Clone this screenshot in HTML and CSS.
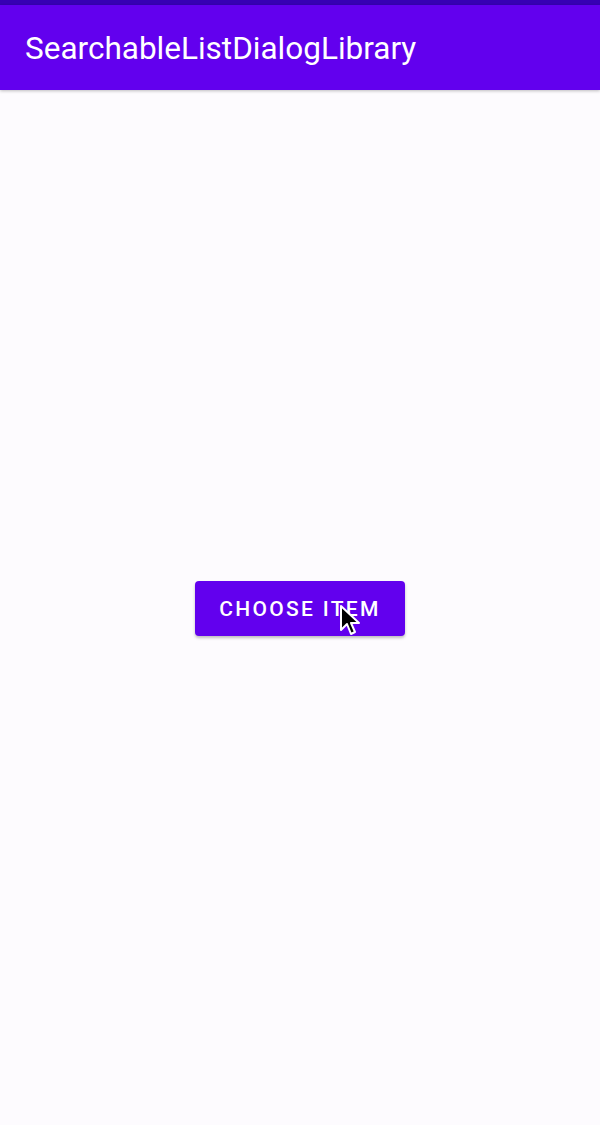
FILE: index.html
```html
<!DOCTYPE html>
<html>
<head>
<meta charset="utf-8">
<link rel="stylesheet" href="styles.css">
</head>
<body>
<div class="status"></div>
<header class="appbar"><h1 class="title">SearchableListDialogLibrary</h1></header>
<main class="content">
  <div class="btn-wrap">
    <button class="btn">CHOOSE ITEM</button>
    <svg class="cursor" width="24" height="34" viewBox="0 0 24 34"><path d="M2 2 L2 26 L8 20 L12 30 L16 28 L12 19 L20 19 Z" fill="#000" stroke="#fff" stroke-width="2" stroke-linejoin="round"/></svg>
  </div>
</main>
</body>
</html>
```
FILE: styles.css
```css
html, body { margin: 0; padding: 0; }
body {
  width: 600px; height: 1125px;
  background: #fdfbfe;
  font-family: Roboto, "Noto Sans", sans-serif;
  display: flex; flex-direction: column;
  overflow: hidden;
}
.status { height: 5px; background: #3700b3; }
.appbar {
  height: 85px; background: #6200ee;
  display: flex; align-items: center;
  padding-left: 25px;
  box-shadow: 0 1px 3px rgba(0,0,0,0.25);
}
.title {
  margin: 0; color: #fff; font-weight: 400; font-size: 31.5px;
  letter-spacing: 0;
  padding-top: 2px;
}
.content {
  flex: 1; display: flex; align-items: center; justify-content: center;
  padding-top: 2px;
}
.btn-wrap { position: relative; }
.btn {
  width: 210px; height: 55px;
  background: #6200ee; color: #fff;
  border: none; border-radius: 4px;
  font-family: Roboto, sans-serif; font-weight: 500; font-size: 21px;
  letter-spacing: 2.3px;
  box-shadow: 0 2px 3px rgba(0,0,0,0.25);
  padding: 0;
}
.cursor { position: absolute; left: 144px; top: 23px; }
```
